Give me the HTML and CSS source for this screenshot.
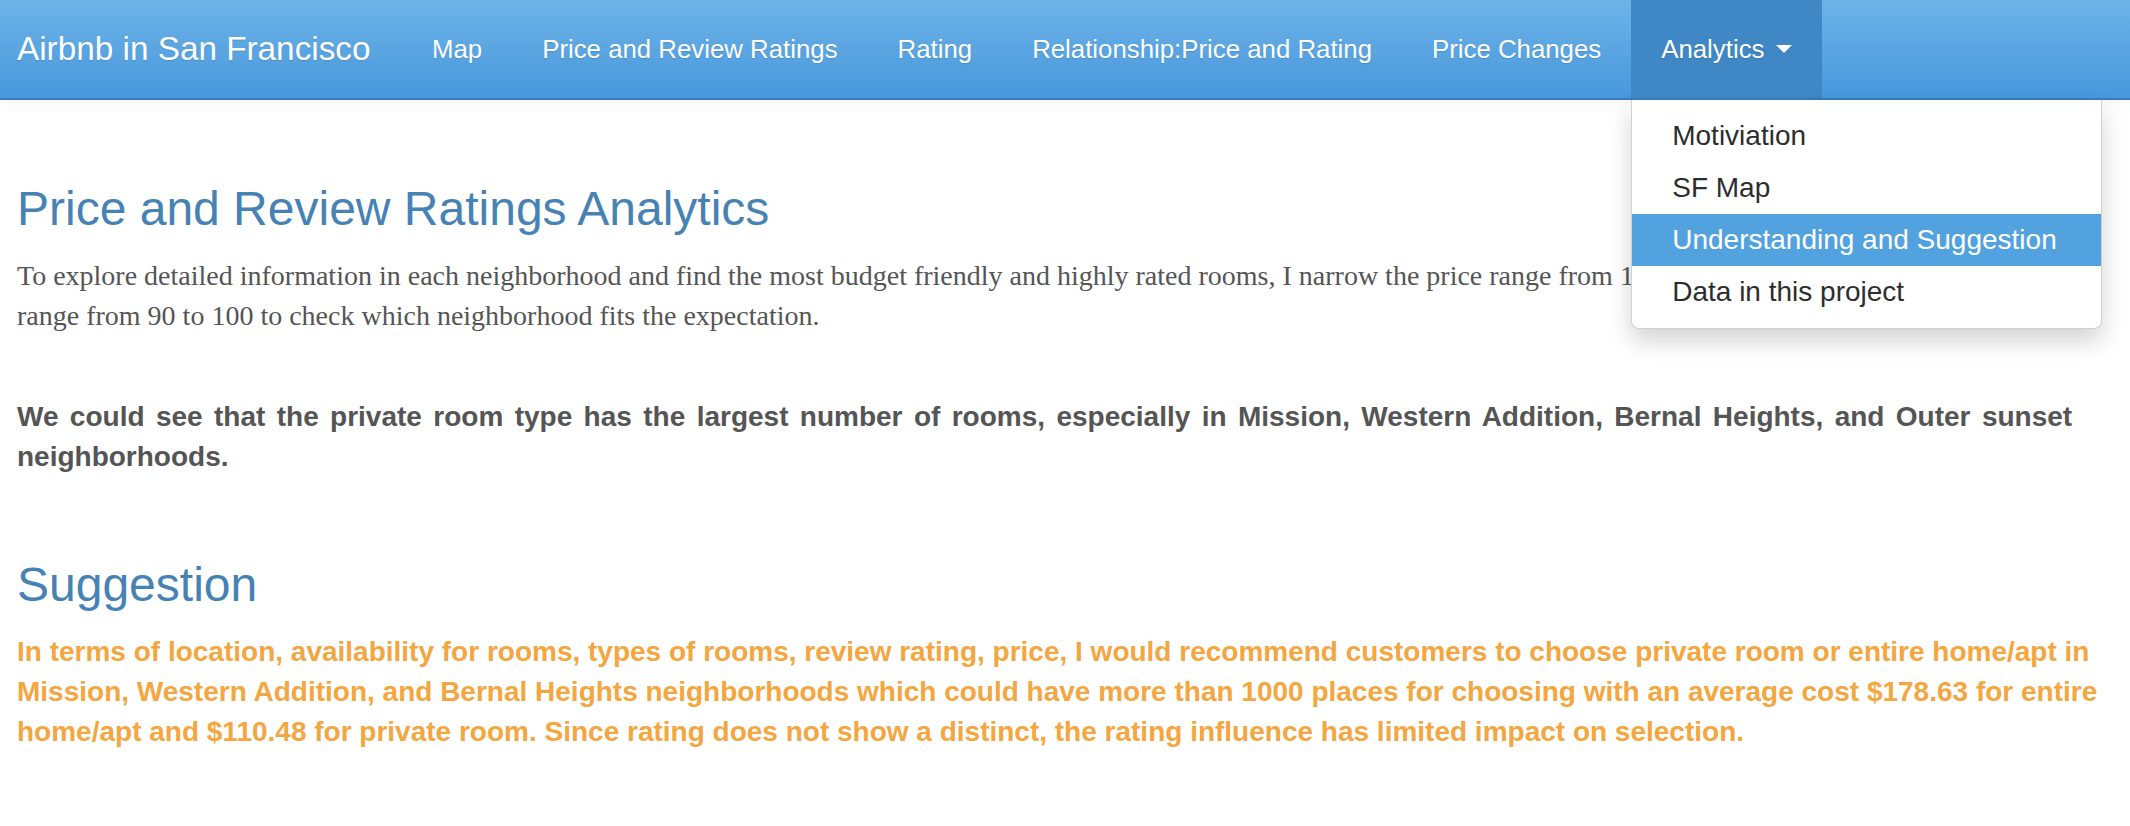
FILE: index.html
```html
<!DOCTYPE html>
<html lang="en">
<head>
<meta charset="utf-8">
<title>Airbnb in San Francisco</title>
<link rel="stylesheet" href="styles.css">
</head>
<body>
<nav class="navbar">
  <a class="brand" href="#">Airbnb in San Francisco</a>
  <ul class="nav">
    <li><a href="#">Map</a></li>
    <li><a href="#">Price and Review Ratings</a></li>
    <li><a href="#">Rating</a></li>
    <li><a href="#">Relationship:Price and Rating</a></li>
    <li><a href="#">Price Changes</a></li>
    <li class="dropdown">
      <a class="dropdown-toggle" href="#">Analytics <span class="caret"></span></a>
      <ul class="dropdown-menu">
        <li><a href="#">Motiviation</a></li>
        <li><a href="#">SF Map</a></li>
        <li><a class="active" href="#">Understanding and Suggestion</a></li>
        <li><a href="#">Data in this project</a></li>
      </ul>
    </li>
  </ul>
</nav>
<main class="content">
  <h3 class="title first">Price and Review Ratings Analytics</h3>
  <p class="intro">To explore detailed information in each neighborhood and find the most budget friendly and highly rated rooms, I narrow the price range from 100 to 300 and the review rating<br>range from 90 to 100 to check which neighborhood fits the expectation.</p>
  <p class="finding">We could see that the private room type has the largest number of rooms, especially in Mission, Western Addition, Bernal Heights, and Outer sunset neighborhoods.</p>
  <h3 class="title">Suggestion</h3>
  <p class="suggestion">In terms of location, availability for rooms, types of rooms, review rating, price, I would recommend customers to choose private room or entire home/apt in Mission, Western Addition, and Bernal Heights neighborhoods which could have more than 1000 places for choosing with an average cost $178.63 for entire home/apt and $110.48 for private room. Since rating does not show a distinct, the rating influence has limited impact on selection.</p>
</main>
</body>
</html>
```

FILE: styles.css
```css
* {
  box-sizing: border-box;
}

body {
  margin: 0;
  background: #fff;
  font-family: "Liberation Sans", Arial, Helvetica, sans-serif;
  color: #333;
}

.navbar {
  position: relative;
  z-index: 10;
  display: flex;
  height: 100px;
  border-bottom: 2px solid #3b7db9;
  background: linear-gradient(#6db3e8, #4898dc);
  box-shadow: 0 2px 10px rgba(0, 0, 0, 0.05);
}

.brand {
  display: flex;
  align-items: center;
  padding: 0 31.5px 0 17px;
  font-size: 33.3px;
  color: #fff;
  text-decoration: none;
  text-shadow: 0 1px 1px rgba(0, 0, 0, 0.12);
  white-space: nowrap;
}

.nav {
  display: flex;
  margin: 0;
  padding: 0;
  list-style: none;
}

.nav > li {
  position: relative;
  display: flex;
}

.nav > li > a {
  display: flex;
  align-items: center;
  padding: 0 30px;
  font-size: 25.8px;
  color: #fff;
  text-decoration: none;
  text-shadow: 0 1px 1px rgba(0, 0, 0, 0.12);
  white-space: nowrap;
}

.nav > li > a.dropdown-toggle {
  background: #3f87c5;
}

.caret {
  display: inline-block;
  width: 0;
  height: 0;
  margin-left: 12px;
  border-top: 8px solid #fff;
  border-left: 8px solid transparent;
  border-right: 8px solid transparent;
}

.dropdown-menu {
  position: absolute;
  top: 100px;
  left: 0;
  width: 471px;
  margin: 0;
  padding: 10px 0;
  list-style: none;
  background: #fff;
  border: 1px solid rgba(0, 0, 0, 0.18);
  border-top: 0;
  border-radius: 0 0 8px 8px;
  box-shadow: 0 12px 24px rgba(0, 0, 0, 0.175);
}

.dropdown-menu a {
  display: block;
  padding: 6px 40px;
  font-size: 28px;
  line-height: 40px;
  color: #2d2d2d;
  text-decoration: none;
  white-space: nowrap;
}

.dropdown-menu a.active {
  background: #53a2e0;
  color: #fff;
}

.content {
  padding: 83px 14px 0 17px;
}

.title {
  margin: 0 0 20px;
  font-size: 48px;
  line-height: 52.8px;
  font-weight: 400;
  color: #4682b4;
}

.intro {
  margin: 0 0 61px;
  font-family: "Liberation Serif", "Times New Roman", serif;
  font-size: 28px;
  line-height: 40px;
  color: #555;
}

.finding {
  margin: 0 0 82px;
  font-size: 28px;
  line-height: 40px;
  font-weight: 700;
  word-spacing: 3.6px;
  color: #555;
}

.suggestion {
  margin: 0;
  font-size: 28px;
  line-height: 40px;
  font-weight: 700;
  color: #f4a640;
}
```
